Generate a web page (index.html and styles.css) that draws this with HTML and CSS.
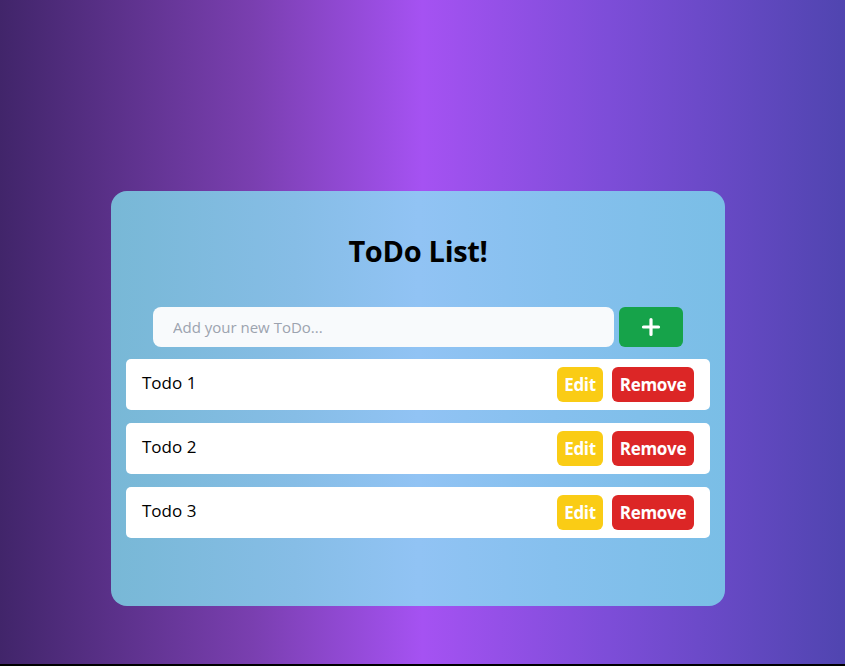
FILE: index.html
```html
<!DOCTYPE html>
<html lang="en">
<head>
<meta charset="utf-8">
<title>ToDo List</title>
<link rel="stylesheet" href="styles.css">
</head>
<body>
<main class="page">
  <section class="card">
    <h1 class="title">ToDo List!</h1>
    <form class="add-form">
      <input class="add-input" type="text" placeholder="Add your new ToDo...">
      <button class="add-btn" type="button" aria-label="Add">
        <svg width="20" height="20" viewBox="0 0 20 20"><path d="M10 2.5v15M2.5 10h15" stroke="#fff" stroke-width="3.2" stroke-linecap="round"/></svg>
      </button>
    </form>
    <ul class="list">
      <li class="item"><span class="item-text">Todo 1</span><div class="actions"><button class="btn btn-edit">Edit</button><button class="btn btn-remove">Remove</button></div></li>
      <li class="item"><span class="item-text">Todo 2</span><div class="actions"><button class="btn btn-edit">Edit</button><button class="btn btn-remove">Remove</button></div></li>
      <li class="item"><span class="item-text">Todo 3</span><div class="actions"><button class="btn btn-edit">Edit</button><button class="btn btn-remove">Remove</button></div></li>
    </ul>
  </section>
</main>
</body>
</html>
```
FILE: styles.css
```css
html {
  background: #000;
}
body {
  margin: 0;
  font-family: "Open Sans", "Noto Sans", sans-serif;
}
.page {
  min-height: 664px;
  box-sizing: border-box;
  padding: 191px 0 0 111px;
  background: linear-gradient(to right, #41256a 0%, #7a3fb0 30%, #a552f2 50%, #7d4dd8 72%, #5045b0 100%);
}
.card {
  width: 614px;
  height: 415px;
  box-sizing: border-box;
  border-radius: 16px;
  padding: 40px 15px 0;
  background: linear-gradient(to right, #78b8d6 0%, #86bde6 30%, #91c3f4 50%, #86c0ee 72%, #7abee6 100%);
}
.title {
  margin: 0;
  text-align: center;
  font-size: 29px;
  font-weight: 700;
  line-height: 40px;
  color: #000;
  letter-spacing: -0.3px;
}
.add-form {
  display: flex;
  justify-content: center;
  gap: 5px;
  margin-top: 36px;
}
.add-input {
  width: 461px;
  height: 40px;
  box-sizing: border-box;
  border: none;
  border-radius: 8px;
  background: #f8fafc;
  padding: 0 20px;
  font-family: inherit;
  font-size: 15px;
  color: #333;
  outline: none;
}
.add-input::placeholder {
  color: #9ca3af;
}
.add-btn {
  width: 64px;
  height: 40px;
  border: none;
  border-radius: 6px;
  background: #16a34a;
  display: flex;
  align-items: center;
  justify-content: center;
  padding: 0;
}
.list {
  list-style: none;
  margin: 12px 0 0;
  padding: 0;
  display: flex;
  flex-direction: column;
  gap: 13px;
}
.item {
  height: 51px;
  box-sizing: border-box;
  background: #fff;
  border-radius: 5px;
  display: flex;
  align-items: center;
  justify-content: space-between;
  padding: 0 16px;
}
.item-text {
  font-size: 17px;
  color: #000;
  margin-top: -5px;
}
.actions {
  display: flex;
  gap: 9px;
}
.btn {
  height: 35px;
  border: none;
  border-radius: 6px;
  color: #fff;
  font-family: inherit;
  font-size: 17px;
  font-weight: 700;
  padding: 0 6px;
  letter-spacing: -0.3px;
}
.btn-edit {
  background: #facc15;
  width: 46px;
}
.btn-remove {
  background: #dc2626;
  width: 82px;
}
```
